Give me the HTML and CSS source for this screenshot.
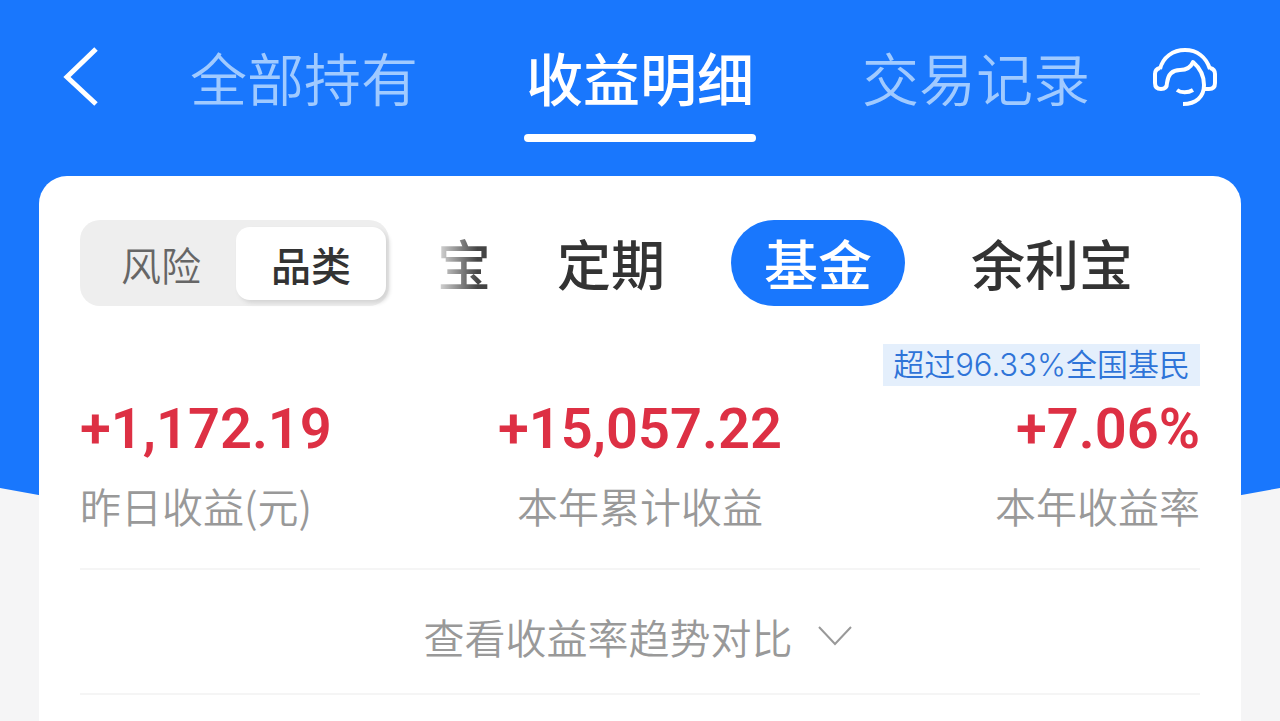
FILE: index.html
```html
<!DOCTYPE html>
<html lang="zh-CN">
<head>
  <meta charset="UTF-8">
  <meta name="viewport" content="width=device-width, initial-scale=1.0">
  <title>收益明细</title>
  <link rel="stylesheet" href="styles.css">
</head>
<body>
  <div class="backdrop"></div>

  <!-- 顶部导航 -->
  <header class="topbar">
    <button class="icon-btn" type="button" aria-label="返回">
      <svg width="36" height="60" viewBox="0 0 36 60" fill="none" stroke="#fff" stroke-width="5">
        <path d="M34 2 L5 30 L34 57"/>
      </svg>
    </button>
    <nav class="tabs">
      <a href="#">全部持有</a>
      <a href="#" class="active">收益明细</a>
      <a href="#">交易记录</a>
    </nav>
    <button class="icon-btn" type="button" aria-label="客服">
      <svg width="66" height="60" viewBox="0 0 66 60" fill="none" stroke="#fff" stroke-width="4" stroke-linejoin="round">
        <path d="M8 22 C11 10 21 3 33 3 C45 3 54 10 58 22"/>
        <path d="M8 21 C4 22 3 24 3 27 V36 C3 40 5 42 9 42 C13 42 15 40 15 36 C16 27 20 23 28 23 C34 23 39 20 41 15 C48 21 52 29 52 38 C52 50 44 57 31 57"/>
        <path d="M58 21 C62 22 63 24 63 27 V36 C63 40 61 42 57 42 H51"/>
        <path d="M25 43 C29 46 36 46 41 43"/>
      </svg>
    </button>
  </header>

  <main class="card">
    <div class="filters">
      <div class="segment">
        <button type="button">风险</button>
        <button type="button" class="active">品类</button>
      </div>
      <div class="chips">
        <button type="button" class="faded">宝</button>
        <button type="button">定期</button>
        <button type="button" class="active">基金</button>
        <button type="button">余利宝</button>
      </div>
    </div>

    <section class="stats">
      <div class="stat">
        <strong>+1,172.19</strong>
        <span>昨日收益(元)</span>
      </div>
      <div class="stat">
        <strong>+15,057.22</strong>
        <span>本年累计收益</span>
      </div>
      <div class="stat">
        <em class="badge">超过96.33%全国基民</em>
        <strong>+7.06%</strong>
        <span>本年收益率</span>
      </div>
    </section>

    <button class="more" type="button">
      查看收益率趋势对比
      <svg width="36" height="24" viewBox="0 0 36 24" fill="none" stroke="#999" stroke-width="2">
        <path d="M2 3 L18 20 L34 3"/>
      </svg>
    </button>
  </main>
</body>
</html>
```
FILE: styles.css
```css
* {
  box-sizing: border-box;
  margin: 0;
  padding: 0;
}

body {
  position: relative;
  min-height: 100vh;
  display: flex;
  flex-direction: column;
  overflow-x: hidden;
  background-color: #f5f5f6;
  color: #333;
  font-family: "Noto Sans CJK SC", sans-serif;
}

button {
  border: none;
  background: none;
  color: inherit;
  font-family: inherit;
  cursor: pointer;
}

svg {
  display: block;
}

/* 蓝色背景，底部向两侧收起 */
.backdrop {
  position: absolute;
  top: 0;
  left: 0;
  right: 0;
  z-index: -1;
  height: 604px;
  background-color: #1977fd;
  clip-path: polygon(0 0, 100% 0, 100% 488px, 50% 100%, 0 488px);
}

.topbar {
  display: grid;
  grid-template-columns: 66px 1fr 66px;
  height: 176px;
  padding: 47px 62px 0;
}

.icon-btn {
  height: 60px;
  justify-self: start;
}

.tabs {
  display: flex;
  justify-content: center;
  gap: 104px;
}

.tabs a {
  padding: 0 2px;
  font-size: 57px;
  line-height: 58px;
  font-weight: 350;
  color: #a0caff;
  text-decoration: none;
}

.tabs .active {
  font-weight: 500;
  color: #fff;
}

.tabs .active::after {
  content: "";
  display: block;
  height: 8px;
  margin: 29px -2px 0;
  border-radius: 4px;
  background-color: #fff;
}

.card {
  flex: 1;
  margin: 0 39px;
  padding: 44px 41px 0;
  border-radius: 28px 28px 0 0;
  background-color: #fff;
}

.filters {
  display: flex;
  gap: 48px;
}

.segment {
  display: flex;
  flex-shrink: 0;
  height: 86px;
  padding: 7px 3px 6px 6px;
  border-radius: 20px;
  background-color: #eee;
}

.segment button {
  width: 150px;
  border-radius: 14px;
  font-size: 40px;
  line-height: 72px;
  font-weight: 350;
  color: #666;
}

.segment .active {
  background-color: #fff;
  box-shadow: 3px 3px 4px #d4d4d4;
  font-weight: 500;
  color: #333;
}

.chips {
  display: flex;
  gap: 66px;
  overflow: hidden;
}

.chips button {
  flex-shrink: 0;
  height: 86px;
  font-size: 54px;
  line-height: 86px;
  font-weight: 500;
}

.chips .active {
  padding: 0 33px;
  border-radius: 43px;
  background-color: #1977fd;
  color: #fff;
}

.chips .faded {
  background: linear-gradient(to right, #ddd, #444 75%);
  background-clip: text;
  -webkit-background-clip: text;
  color: transparent;
}

.stats {
  display: grid;
  grid-template-columns: 1fr 1fr 1fr;
  align-items: end;
  padding: 38px 0 30px;
  border-bottom: 2px solid #f5f5f5;
}

.stat {
  display: flex;
  flex-direction: column;
  align-items: center;
  white-space: nowrap;
}

.stat:first-child {
  align-items: flex-start;
}

.stat:last-child {
  align-items: flex-end;
}

.stat strong {
  font-family: Roboto, sans-serif;
  font-size: 56px;
  line-height: 86px;
  font-weight: 600;
  color: #dd3044;
}

.stat span {
  font-size: 41px;
  line-height: 66px;
  font-weight: 350;
  color: #999;
}

.stat .badge {
  padding: 0 10px;
  background-color: #e4effc;
  font-family: Inter, "Noto Sans CJK SC", sans-serif;
  font-size: 31px;
  line-height: 42px;
  font-style: normal;
  font-weight: 350;
  color: #2f74d8;
}

.more {
  display: flex;
  align-items: center;
  justify-content: center;
  gap: 24px;
  width: 100%;
  height: 125px;
  padding: 8px 4px 0 0;
  border-bottom: 2px solid #f5f5f5;
  font-size: 41px;
  font-weight: 350;
  color: #999;
}
```
